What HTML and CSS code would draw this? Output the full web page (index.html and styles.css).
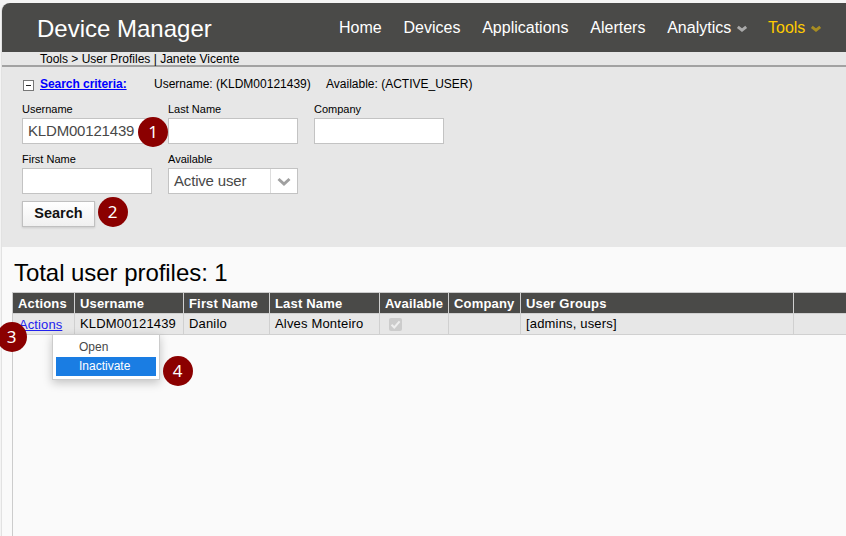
FILE: index.html
```html
<!DOCTYPE html>
<html lang="en">
<head>
<meta charset="utf-8">
<title>Device Manager</title>
<link rel="stylesheet" href="styles.css">
</head>
<body>
<div class="app">
  <header class="topbar">
    <div class="brand">Device Manager</div>
    <nav class="nav">
      <a>Home</a>
      <a>Devices</a>
      <a>Applications</a>
      <a>Alerters</a>
      <a>Analytics<svg class="caret" viewBox="0 0 12 8"><path d="M1.8 1.8 6 5.2 10.200 1.800"/></svg></a>
      <a class="current">Tools<svg class="caret" viewBox="0 0 12 8"><path d="M1.8 1.8 6 5.2 10.200 1.800"/></svg></a>
    </nav>
  </header>
  <div class="crumbs"><span>Tools &gt; User Profiles | Janete Vicente</span></div>
  <section class="search">
    <div class="criteria">
      <span class="toggle"></span>
      <a class="criteria-link">Search criteria:</a>
      <span class="crit-user">Username: (KLDM00121439)</span>
      <span class="crit-avail">Available: (ACTIVE_USER)</span>
    </div>
    <div class="fields">
      <div class="field"><label>Username</label><div class="input">KLDM00121439<span class="step step-1">1</span></div></div>
      <div class="field"><label>Last Name</label><div class="input"></div></div>
      <div class="field"><label>Company</label><div class="input"></div></div>
      <div class="field"><label>First Name</label><div class="input"></div></div>
      <div class="field"><label>Available</label><div class="input select"><span>Active user</span><i><svg viewBox="0 0 14 10"><path d="M1.500 2 7 7 12.500 2"/></svg></i></div></div>
    </div>
    <div class="submit"><div class="button">Search</div><span class="step step-2">2</span></div>
  </section>
  <main class="results">
    <h1>Total user profiles: 1</h1>
    <div class="grid">
      <div class="row head">
        <div>Actions</div><div>Username</div><div>First Name</div><div>Last Name</div><div>Available</div><div>Company</div><div>User Groups</div><div></div>
      </div>
      <div class="row">
        <div class="actions"><a>Actions</a>
          <span class="step step-3">3</span>
          <div class="menu"><div>Open</div><div class="active">Inactivate<span class="step step-4">4</span></div></div>
        </div>
        <div>KLDM00121439</div><div>Danilo</div><div>Alves Monteiro</div>
        <div class="check"><svg viewBox="0 0 13 13"><rect width="13" height="13" rx="2"/><path d="M2.500 6.700 5.300 9.500 10.600 3.300"/></svg></div>
        <div></div><div>[admins, users]</div><div></div>
      </div>
    </div>
  </main>
</div>
</body>
</html>
```
FILE: styles.css
```css
* { box-sizing: border-box; }
body {
  margin: 0;
  height: 536px;
  padding: 3px 0 0 1px;
  overflow: hidden;
  background: #f4f4f4;
  color: #000;
  font: 12px/14px "Liberation Sans", Arial, sans-serif;
}
.app {
  display: flex;
  flex-direction: column;
  height: 533px;
  border-left: 1px solid #e2e2e2;
  border-top-left-radius: 8px;
  white-space: nowrap;
}
.topbar {
  display: flex;
  height: 49px;
  padding-left: 35px;
  background: #4a4a48;
  border-top-left-radius: 8px;
  color: #fff;
}
.brand { width: 302px; font-size: 24px; line-height: 52px; }
.nav { display: flex; gap: 21.8px; font-size: 16px; line-height: 49px; }
.nav a { display: flex; align-items: center; }
.current { color: #fc0; }
.caret { width: 12px; height: 8px; margin: 3px 0 0 5px; fill: none; stroke: #aaa; stroke-width: 2.8; }
.nav a:nth-child(5) { margin-right: -2px; }
.current .caret { stroke: #a88d22; }
.crumbs {
  height: 15px;
  padding-left: 38px;
  background: #e7e7e7;
  border-bottom: 2px solid #a2a2a2;
  line-height: 14px;
}
.search { height: 180px; padding: 9px 0 0 20px; background: #e7e7e7; }
.criteria { display: flex; height: 26px; line-height: 16px; }
.toggle {
  display: flex;
  align-items: center;
  justify-content: center;
  width: 11px;
  height: 11px;
  margin: 4px 6px 0 1px;
  border: 1px solid #777;
  background: #fff;
}
.toggle::before { content: ""; width: 5px; height: 1px; background: #222; }
.criteria-link { width: 114px; color: #00f; font-weight: bold; letter-spacing: -.05px; text-decoration: underline; }
.crit-user { width: 172px; }
.fields { display: grid; grid-template-columns: repeat(3, 130px); column-gap: 16px; row-gap: 7px; }
.field { height: 43px; }
.field label { display: block; height: 16px; font-size: 11px; line-height: 15px; }
.input {
  position: relative;
  width: 130px;
  height: 26px;
  padding-left: 5px;
  border: 1px solid #c3c3c3;
  background: #fff;
  color: #484848;
  font-size: 15px;
  letter-spacing: -.18px;
  line-height: 24px;
}
.select { display: flex; justify-content: space-between; }
.select i { display: flex; align-items: center; justify-content: center; width: 27px; border-left: 1px solid #ddd; }
.select svg { width: 14px; height: 10px; margin-top: 2px; fill: none; stroke: #a0a0a0; stroke-width: 3; }
.submit { position: relative; margin-top: 6px; }
.button {
  width: 73px;
  height: 26px;
  border: 1px solid #c0c0c0;
  background: linear-gradient(#fff, #f0f0f0);
  box-shadow: 0 1px 2px rgba(0, 0, 0, .12);
  color: #111;
  font-size: 14.5px;
  font-weight: bold;
  line-height: 23px;
  text-align: center;
}
.step {
  position: absolute;
  z-index: 2;
  width: 30px;
  height: 30px;
  border-radius: 50%;
  background: #8b0000;
  color: #fff;
  font: 17px/30px "Noto Sans", sans-serif;
  letter-spacing: 0;
  text-align: center;
}
.step-1 { left: 115px; top: -2px; }
.step-2 { left: 75.500px; top: -4px; }
.step-3 { left: -16.500px; top: 8px; }
.step-4 { left: 106.500px; top: -1.500px; }
.results { display: flex; flex: 1; flex-direction: column; padding: 11px 0 0 10px; background: #fafafa; }
h1 { height: 34px; margin: 0 0 0 2px; font-size: 24px; font-weight: normal; letter-spacing: -.05px; line-height: 30px; }
.grid { flex: 1; border: 1px solid #ccc; border-width: 1px 0 0 1px; font-size: 13px; line-height: 20px; }
.row {
  display: grid;
  grid-template-columns: 62px 109px 86px 110px 69px 72px 273px 1fr;
  height: 21px;
  border-bottom: 1px solid #d0d0d0;
  background: #e7e7e7;
}
.row > div { padding-left: 5px; border-right: 1px solid #d0d0d0; letter-spacing: .17px; }
.row > div:last-child { border-right: 0; }
.head { background: #4a4a48; color: #fff; font-weight: bold; }
.head > div { line-height: 21px; }
.row > .actions { position: relative; letter-spacing: .1px; line-height: 21px; }
.actions a { margin-left: 1px; color: #22e; text-decoration: underline; }
.menu {
  position: absolute;
  z-index: 1;
  left: 39px;
  top: 20px;
  width: 108px;
  height: 46px;
  padding: 3px;
  border: 1px solid #ccc;
  background: #fff;
  box-shadow: 0 3px 9px rgba(0, 0, 0, .22);
  color: #484848;
  font-size: 12px;
  letter-spacing: 0;
}
.menu > div { height: 19px; padding-left: 23px; line-height: 18px; }
.menu .active { position: relative; background: #1a7de3; color: #fff; }
.row > .check { padding: 4px 0 0 9px; }
.check svg { display: block; width: 13px; height: 13px; fill: #ccc; }
.check path { fill: none; stroke: #eee; stroke-width: 2; }
```
